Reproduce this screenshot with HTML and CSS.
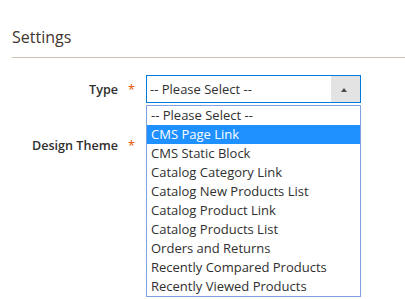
FILE: index.html
```html
<!DOCTYPE html>
<html lang="en">
<head>
    <meta charset="UTF-8">
    <title>Settings</title>
    <link rel="stylesheet" href="styles.css">
</head>
<body>
    <div class="fieldset">
        <div class="legend">Settings</div>
        <div class="field">
            <label class="label">Type<span class="required">*</span></label>
            <div class="control">
                <div class="select focused">
                    <span class="select-value">-- Please Select --</span>
                    <span class="select-arrow"></span>
                </div>
                <ul class="dropdown">
                    <li>-- Please Select --</li>
                    <li class="active">CMS Page Link</li>
                    <li>CMS Static Block</li>
                    <li>Catalog Category Link</li>
                    <li>Catalog New Products List</li>
                    <li>Catalog Product Link</li>
                    <li>Catalog Products List</li>
                    <li>Orders and Returns</li>
                    <li>Recently Compared Products</li>
                    <li>Recently Viewed Products</li>
                </ul>
            </div>
        </div>
        <div class="field">
            <label class="label">Design Theme<span class="required">*</span></label>
            <div class="control">
                <!-- covered by the open dropdown above -->
                <div class="select">
                    <span class="select-value"></span>
                    <span class="select-arrow"></span>
                </div>
            </div>
        </div>
    </div>
</body>
</html>
```

FILE: styles.css
```css
html, body {
    height: 100%;
}

body {
    margin: 0;
    background: #fff;
    font-family: 'Open Sans', 'Liberation Sans', sans-serif;
    color: #303030;
}

.fieldset {
    padding-left: 12px;
}

.legend {
    font-size: 16px;
    line-height: 22px;
    color: #41362f;
    padding-top: 26px;
    padding-bottom: 9px;
    border-bottom: 1px solid #cac3b4;
    margin-bottom: 17px;
}

.field {
    display: flex;
    align-items: center;
    margin-bottom: 28px;
}

.label {
    width: 122px;
    margin-right: 12px;
    display: flex;
    justify-content: flex-end;
    align-items: center;
    font-size: 12.6px;
    font-weight: 600;
    color: #303030;
}

.required {
    color: #eb5202;
    font-weight: 400;
    margin-left: 10px;
    width: 6px;
}

.control {
    position: relative;
    width: 215px;
}

.select {
    box-sizing: border-box;
    height: 28px;
    border: 1px solid #adadad;
    display: flex;
    align-items: center;
    font-size: 13px;
}

.select.focused {
    border-color: #007bdb;
}

.select-value {
    flex: 1;
    padding-left: 3px;
}

.select-arrow {
    width: 29px;
    align-self: stretch;
    background: #e3e3e3;
    position: relative;
}

.select-arrow::after {
    content: '';
    position: absolute;
    left: 10px;
    top: 12px;
    border-left: 3.5px solid transparent;
    border-right: 3.5px solid transparent;
    border-bottom: 4px solid #514943;
}

.dropdown {
    position: absolute;
    z-index: 10;
    top: 30px;
    left: 0;
    width: 215px;
    box-sizing: border-box;
    margin: 0;
    padding: 0;
    list-style: none;
    background: #fff;
    border: 1px solid #7fa3df;
    font-size: 13px;
}

.dropdown li {
    height: 19px;
    line-height: 19px;
    padding-left: 4px;
    white-space: nowrap;
}

.dropdown li.active {
    background: #1e90ff;
    color: #fff;
}
```
